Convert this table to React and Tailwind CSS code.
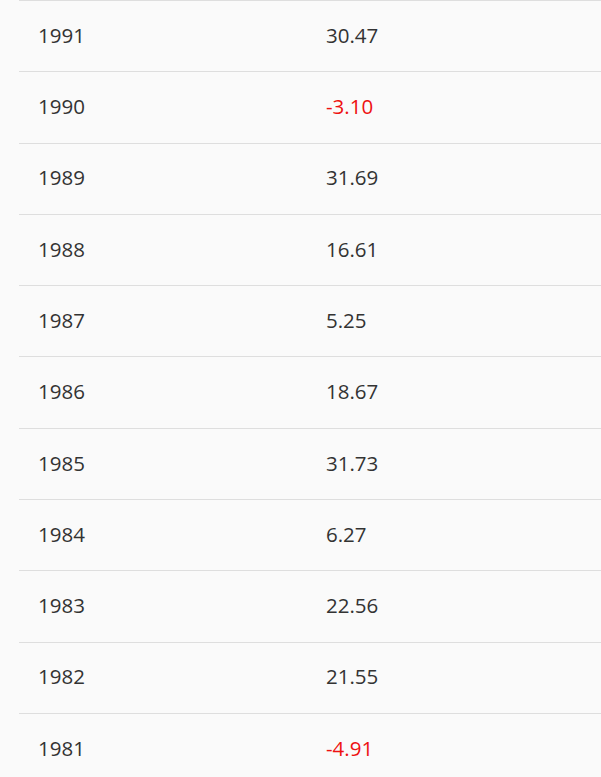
const rows = [
  ["1991", "30.47"],
  ["1990", "-3.10"],
  ["1989", "31.69"],
  ["1988", "16.61"],
  ["1987", "5.25"],
  ["1986", "18.67"],
  ["1985", "31.73"],
  ["1984", "6.27"],
  ["1983", "22.56"],
  ["1982", "21.55"],
  ["1981", "-4.91"],
];

export default function App() {
  return (
    <div
      className="w-[601px] h-[777px] overflow-hidden bg-[#fafafa] pl-[19px]"
      style={{ fontFamily: '"Open Sans", "Noto Sans", sans-serif' }}
    >
      {rows.map(([y, v]) => (
        <div
          key={y}
          className="flex items-center h-[71.3px] border-t-[1.5px] border-[#dedede] text-[20.5px] text-[#333] pb-[2px]"
        >
          <div className="w-[307px] shrink-0 pl-[19px]">{y}</div>
          <div className={v.startsWith("-") ? "text-[#ee1111]" : ""}>{v}</div>
        </div>
      ))}
    </div>
  );
}
